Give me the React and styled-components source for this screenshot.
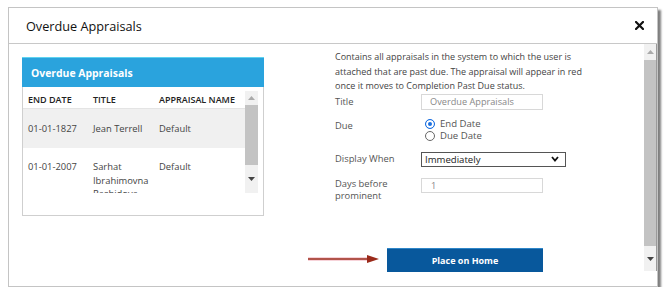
import React from "react";
import styled, { createGlobalStyle } from "styled-components";

const Global = createGlobalStyle`
  html, body { margin: 0; padding: 0; background: #ffffff; }
  body { font-family: "Open Sans", "Liberation Sans", sans-serif; color: #333; }
`;

const Page = styled.div`
  padding: 7px 0 0 8px;
`;

const Dialog = styled.div`
  width: 650px;
  height: 280px;
  box-sizing: border-box;
  border: 1px solid #c4c4c4;
  background: #fff;
  box-shadow: 3px 3px 2px rgba(0, 0, 0, 0.5);
  display: flex;
  flex-direction: column;
`;

const Header = styled.div`
  height: 36px;
  box-sizing: border-box;
  border-bottom: 1px solid #c8c8c8;
  display: flex;
  align-items: center;
  justify-content: space-between;
  padding: 0 12px 0 17px;
  flex-shrink: 0;
`;

const Title = styled.h1`
  margin: 0;
  font-size: 12.7px;
  font-weight: 400;
  color: #111;
`;

const Close = styled.button`
  border: 0;
  background: none;
  padding: 0;
  width: 12px;
  height: 12px;
  display: flex;
  align-items: center;
  justify-content: center;
  cursor: pointer;
`;

const Body = styled.div`
  display: flex;
  flex: 1;
  min-height: 0;
`;

const Content = styled.div`
  flex: 1;
  display: flex;
  align-items: flex-start;
  padding: 6px 0 0 13px;
  min-height: 0;
`;

const TableCard = styled.div`
  margin-top: 7px;
  width: 242px;
  height: 159px;
  box-sizing: border-box;
  border: 1px solid #cfcfcf;
  border-top: 0;
  display: flex;
  flex-direction: column;
`;

const CardHead = styled.div`
  height: 30px;
  background: #2aa3dd;
  border-top: 1px solid #5fd3f0;
  box-sizing: border-box;
  color: #fff;
  font-size: 10.4px;
  font-weight: 700;
  display: flex;
  align-items: center;
  padding-left: 9px;
  margin: 0 -1px;
`;

const TableWrap = styled.div`
  margin-top: 4px;
  height: 102px;
  display: flex;
  overflow: hidden;
`;

const Rows = styled.div`
  flex: 1;
  overflow: hidden;
`;

const Grid = styled.div`
  display: grid;
  grid-template-columns: 65px 66px 1fr;
  padding-left: 5px;
  font-size: ${(p) => (p.$head ? 9 : 9.4)}px;
  line-height: 13.5px;
  background: ${(p) => (p.$shade ? "#f0f0f0" : "transparent")};
  height: ${(p) => p.$h}px;
  align-items: ${(p) => (p.$top ? "start" : "center")};
  padding-top: ${(p) => p.$pt || 0}px;
  box-sizing: border-box;
  border-bottom: ${(p) => (p.$line ? "1px solid #e4e4e4" : "0")};
  color: ${(p) => (p.$head ? "#222" : "#444")};
  font-weight: ${(p) => (p.$head ? 600 : 400)};
`;

const MiniScroll = styled.div`
  width: 13px;
  margin-right: 5px;
  background: #f1f1f1;
  display: flex;
  flex-direction: column;
  align-items: center;
`;

const Arrow = styled.div`
  height: ${(p) => p.$h}px;
  display: flex;
  align-items: center;
  justify-content: center;
  flex-shrink: 0;
`;

const Thumb = styled.div`
  width: 100%;
  height: ${(p) => p.$h}px;
  background: #c3c3c3;
  flex-shrink: 0;
`;

const Right = styled.div`
  width: 250px;
  margin-left: 71px;
  display: flex;
  flex-direction: column;
`;

const Desc = styled.p`
  margin: 0;
  font-size: 9px;
  line-height: 14.5px;
  color: #444;
`;

const FormRow = styled.div`
  display: flex;
  align-items: flex-start;
  margin-top: ${(p) => p.$mt}px;
  font-size: 9.4px;
  color: #555;
`;

const Label = styled.div`
  width: 86px;
  flex-shrink: 0;
  line-height: 12.5px;
  padding-top: ${(p) => p.$pt || 0}px;
`;

const TextBox = styled.div`
  width: 122px;
  height: ${(p) => p.$h || 16}px;
  box-sizing: border-box;
  border: 1px solid #d8d8d8;
  padding-left: ${(p) => p.$pl || 8}px;
  color: #888;
  font-size: 9.2px;
  display: flex;
  align-items: center;
`;

const Select = styled.div`
  width: 145px;
  height: 15px;
  box-sizing: border-box;
  border: 1px solid #555;
  padding: 0 6px 0 3px;
  color: #222;
  font-size: 9.6px;
  display: flex;
  align-items: center;
  justify-content: space-between;
`;

const Radios = styled.div`
  display: flex;
  flex-direction: column;
  padding-left: 4px;
`;

const RadioItem = styled.div`
  display: flex;
  align-items: center;
  height: 12px;
  gap: 5px;
  color: #555;
  font-size: 9.6px;
`;

const Dot = styled.span`
  width: 10px;
  height: 10px;
  box-sizing: border-box;
  border-radius: 50%;
  border: 1px solid ${(p) => (p.$on ? "#1a6fe0" : "#666")};
  background: ${(p) => (p.$on ? "#1a6fe0" : "#fff")};
  box-shadow: ${(p) => (p.$on ? "inset 0 0 0 2px #fff" : "none")};
  display: inline-block;
`;

const ButtonRow = styled.div`
  margin: 45px 0 0 52px;
  position: relative;
  width: 156px;
`;

const Button = styled.button`
  width: 156px;
  height: 24px;
  border: 0;
  background: #08589c;
  border-top: 1px solid #2e86c8;
  color: #fff;
  font-family: "Open Sans", "Liberation Sans", sans-serif;
  font-size: 9px;
  font-weight: 700;
  cursor: pointer;
  display: block;
`;

const Pointer = styled.svg`
  position: absolute;
  left: -80px;
  top: 5px;
`;

const Scroll = styled.div`
  width: 12px;
  height: 227px;
  background: #f1f1f1;
  border-right: 1px solid #9a9a9a;
  display: flex;
  flex-direction: column;
  align-items: center;
  flex-shrink: 0;
`;

const Up = ({ c = "#aaa" }) => (
  <svg width="7" height="4" viewBox="0 0 7 4">
    <path d="M0 4 L3.5 0 L7 4 Z" fill={c} />
  </svg>
);
const Down = ({ c = "#444" }) => (
  <svg width="7" height="4" viewBox="0 0 7 4">
    <path d="M0 0 L3.5 4 L7 0 Z" fill={c} />
  </svg>
);

export default function App() {
  return (
    <>
      <Global />
      <Page>
        <Dialog>
          <Header>
            <Title>Overdue Appraisals</Title>
            <Close aria-label="close">
              <svg width="9" height="9" viewBox="0 0 9 9">
                <path d="M1 1 L8 8 M8 1 L1 8" stroke="#111" strokeWidth="2.2" strokeLinecap="square" />
              </svg>
            </Close>
          </Header>
          <Body>
            <Content>
              <TableCard>
                <CardHead>Overdue Appraisals</CardHead>
                <TableWrap>
                  <Rows>
                    <Grid $head $h={18} $line>
                      <span>END DATE</span>
                      <span>TITLE</span>
                      <span>APPRAISAL NAME</span>
                    </Grid>
                    <Grid $shade $h={39}>
                      <span>01-01-1827</span>
                      <span>Jean Terrell</span>
                      <span>Default</span>
                    </Grid>
                    <Grid $top $pt={12} $h={60}>
                      <span>01-01-2007</span>
                      <span>Sarhat Ibrahimovna Rashidova</span>
                      <span>Default</span>
                    </Grid>
                  </Rows>
                  <MiniScroll>
                    <Arrow $h={14}><Up /></Arrow>
                    <Thumb $h={60} />
                    <Arrow $h={28}><Down /></Arrow>
                  </MiniScroll>
                </TableWrap>
              </TableCard>
              <Right>
                <Desc>
                  Contains all appraisals in the system to which the user is attached
                  that are past due. The appraisal will appear in red once it moves to
                  Completion Past Due status.
                </Desc>
                <FormRow $mt={0}>
                  <Label $pt={2}>Title</Label>
                  <TextBox>Overdue Appraisals</TextBox>
                </FormRow>
                <FormRow $mt={8}>
                  <Label $pt={2}>Due</Label>
                  <Radios>
                    <RadioItem><Dot $on />End Date</RadioItem>
                    <RadioItem><Dot />Due Date</RadioItem>
                  </Radios>
                </FormRow>
                <FormRow $mt={10}>
                  <Label $pt={1}>Display When</Label>
                  <Select>
                    <span>Immediately</span>
                    <svg width="8" height="6" viewBox="0 0 8 6">
                      <path d="M1 1 L4 4.5 L7 1" stroke="#111" strokeWidth="1.8" fill="none" />
                    </svg>
                  </Select>
                </FormRow>
                <FormRow $mt={11}>
                  <Label $pt={0}>Days before prominent</Label>
                  <TextBox $h={15} $pl={9}>1</TextBox>
                </FormRow>
                <ButtonRow>
                  <Pointer width="74" height="12" viewBox="0 0 74 12">
                    <path d="M1 6 L62 6" stroke="#f3b6c0" strokeWidth="4" opacity="0.6" />
                    <path d="M1 6 L62 6" stroke="#9a2a1a" strokeWidth="1.5" />
                    <path d="M60 2 L72 6 L60 10 Z" fill="#9a2a1a" />
                  </Pointer>
                  <Button>Place on Home</Button>
                </ButtonRow>
              </Right>
            </Content>
            <Scroll>
              <Arrow $h={16}><Up /></Arrow>
              <Thumb $h={186} />
              <Arrow $h={25}><Down /></Arrow>
            </Scroll>
          </Body>
        </Dialog>
      </Page>
    </>
  );
}
